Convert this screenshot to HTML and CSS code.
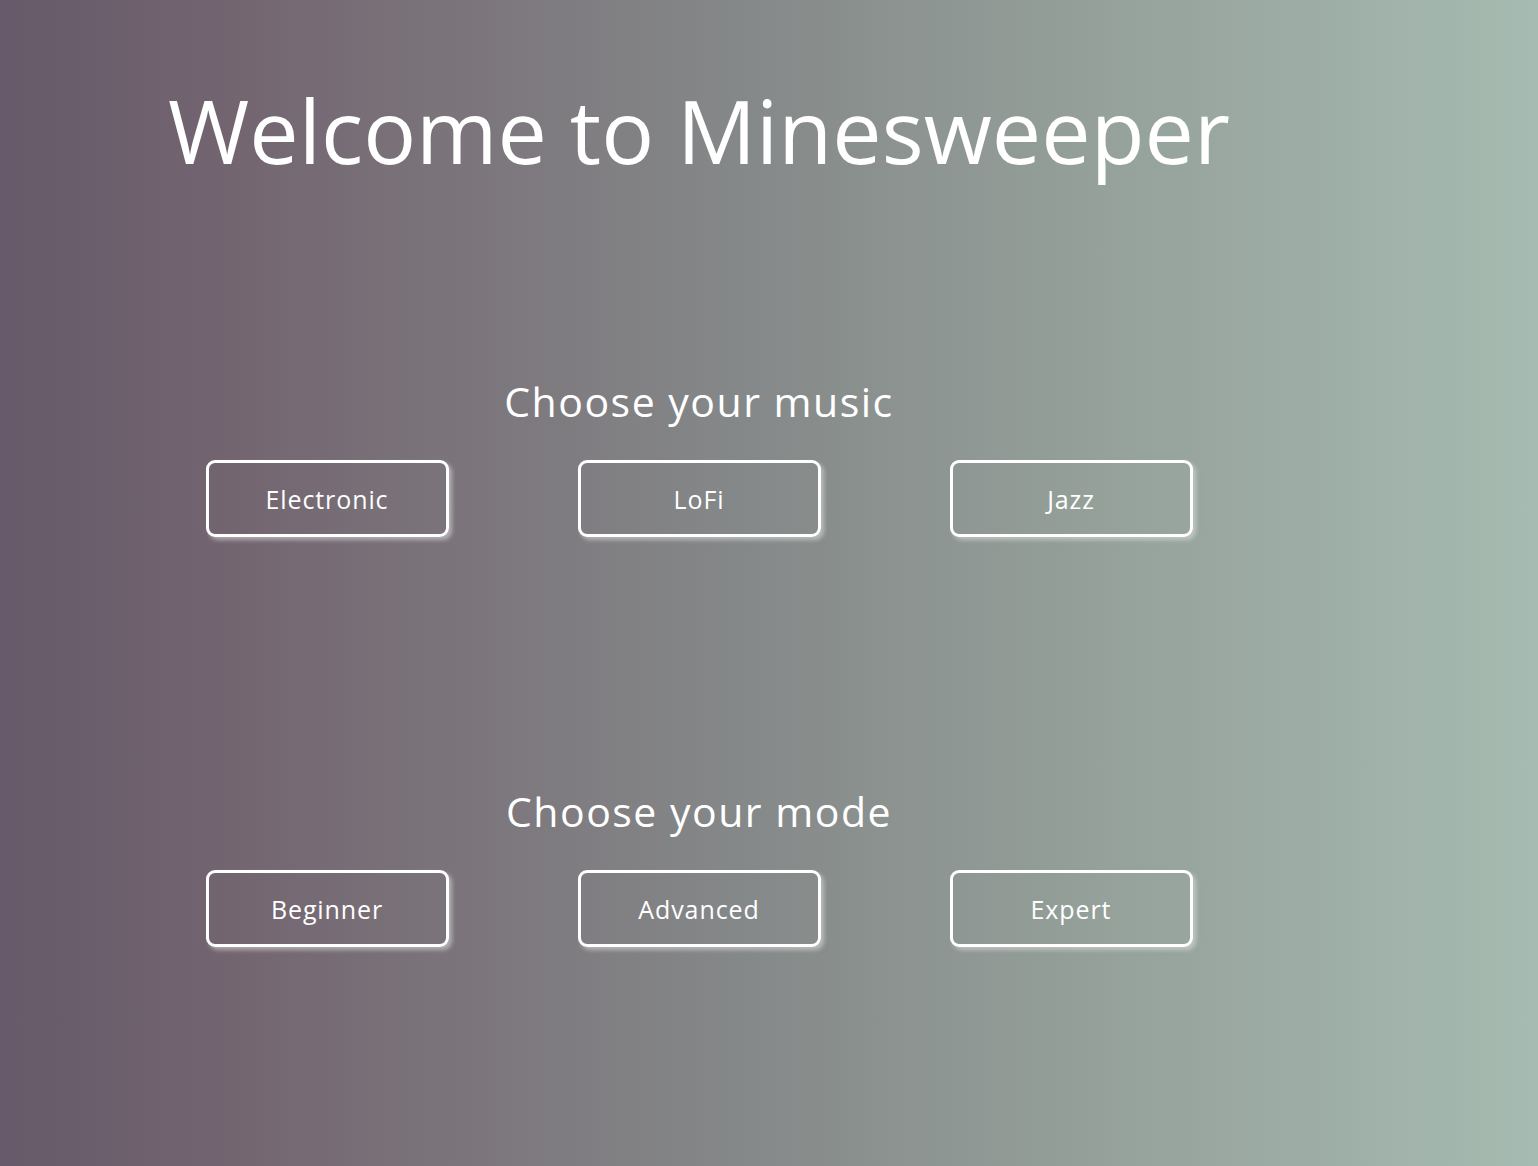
FILE: index.html
```html
<!DOCTYPE html>
<html lang="en">
<head>
<meta charset="utf-8">
<title>Minesweeper</title>
<link rel="stylesheet" href="styles.css">
</head>
<body>
<main class="page">
  <h1 class="title">Welcome to Minesweeper</h1>
  <section class="choice choice-music">
    <h2 class="choice-title">Choose your music</h2>
    <div class="options">
      <button class="option">Electronic</button>
      <button class="option">LoFi</button>
      <button class="option">Jazz</button>
    </div>
  </section>
  <section class="choice choice-mode">
    <h2 class="choice-title">Choose your mode</h2>
    <div class="options">
      <button class="option">Beginner</button>
      <button class="option">Advanced</button>
      <button class="option">Expert</button>
    </div>
  </section>
</main>
</body>
</html>
```

FILE: styles.css
```css
html, body {
  margin: 0;
  padding: 0;
}
body {
  min-height: 1166px;
  background: linear-gradient(to right, #665969 0%, #736570 15%, #868a8a 50%, #949f99 70%, #a6bbb1 100%);
  color: #fff;
  font-family: "Open Sans", "Liberation Sans", sans-serif;
}
.page {
  width: 1398px;
  text-align: center;
  padding-top: 86px;
}
.title {
  margin: 0;
  font-size: 88px;
  line-height: 88px;
  font-weight: 500;
  letter-spacing: 0;
}
.choice {
  display: flex;
  flex-direction: column;
  align-items: center;
}
.choice-music {
  margin-top: 207px;
}
.choice-mode {
  margin-top: 254px;
}
.choice-title {
  margin: 0;
  font-size: 41px;
  line-height: 41px;
  font-weight: 500;
  letter-spacing: 1.5px;
}
.options {
  display: flex;
  justify-content: center;
  gap: 129px;
  margin-top: 38px;
}
.option {
  width: 243px;
  height: 77px;
  box-sizing: border-box;
  border: 3px solid #fff;
  border-radius: 9px;
  background: transparent;
  color: #fff;
  font-family: inherit;
  font-size: 25px;
  letter-spacing: 0.9px;
  box-shadow: 3px 3px 4px rgba(225, 225, 225, 0.55);
  cursor: pointer;
}
```
